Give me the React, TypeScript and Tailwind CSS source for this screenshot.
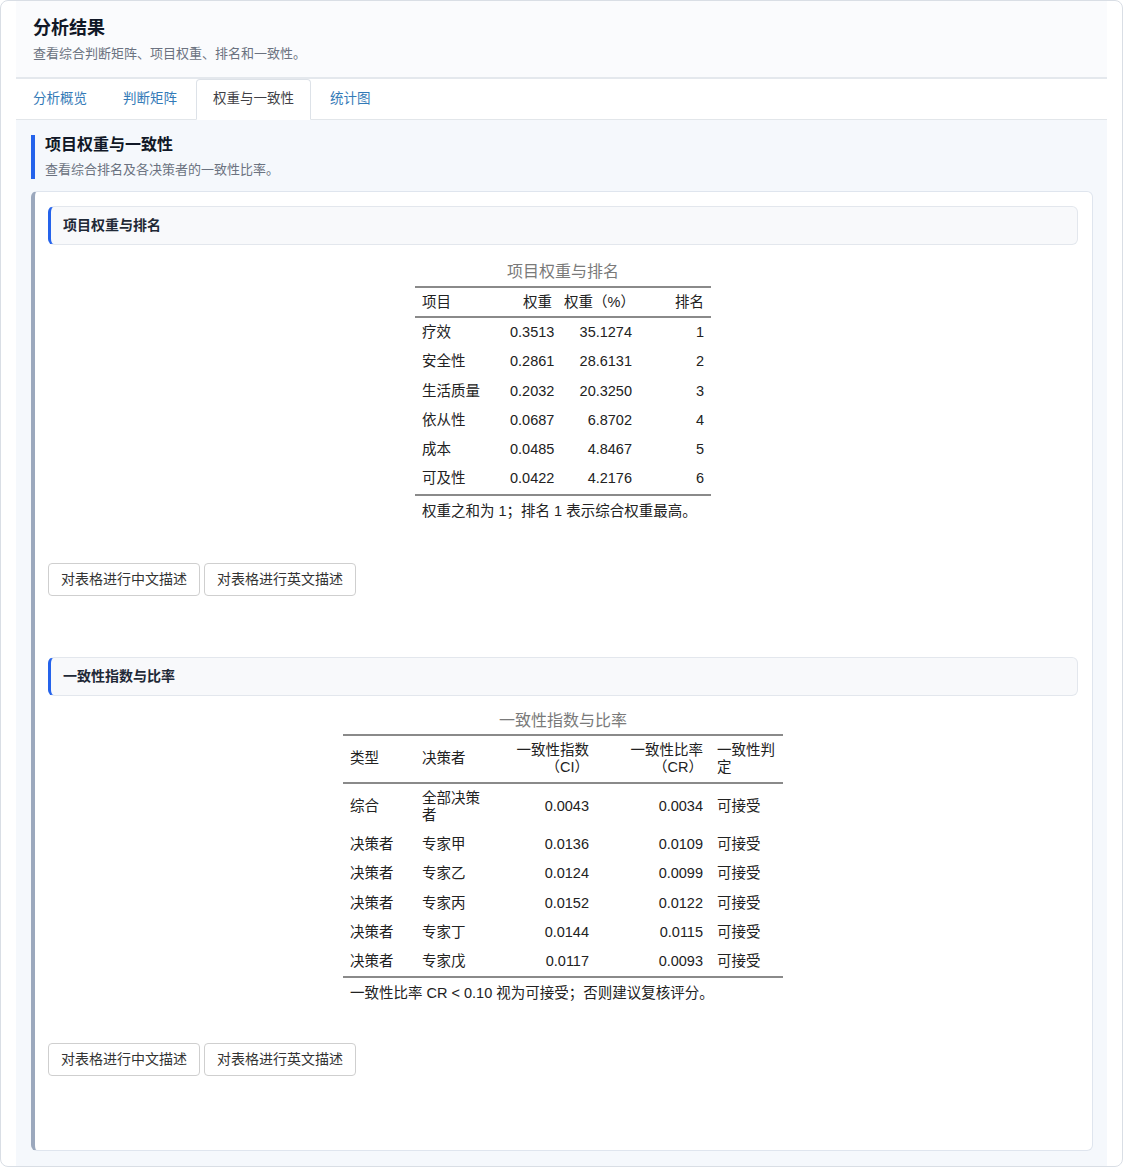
import React from 'react';

const FONT = '"Liberation Sans", "Noto Sans CJK SC", sans-serif';

const weights = [
  ['疗效', '0.3513', '35.1274', '1'],
  ['安全性', '0.2861', '28.6131', '2'],
  ['生活质量', '0.2032', '20.3250', '3'],
  ['依从性', '0.0687', '6.8702', '4'],
  ['成本', '0.0485', '4.8467', '5'],
  ['可及性', '0.0422', '4.2176', '6'],
];

const consistency = [
  ['综合', '全部决策者', '0.0043', '0.0034', '可接受'],
  ['决策者', '专家甲', '0.0136', '0.0109', '可接受'],
  ['决策者', '专家乙', '0.0124', '0.0099', '可接受'],
  ['决策者', '专家丙', '0.0152', '0.0122', '可接受'],
  ['决策者', '专家丁', '0.0144', '0.0115', '可接受'],
  ['决策者', '专家戊', '0.0117', '0.0093', '可接受'],
];

function SubHeader({ title }: { title: string }) {
  return (
    <div className="h-[39px] flex items-center pl-[12px] bg-[#f8f9fb] border border-[#e3e7ed] border-l-[3px] border-l-[#2563eb] rounded-md">
      <span className="text-[14px] font-bold text-[#1f2937]">{title}</span>
    </div>
  );
}

function Buttons() {
  return (
    <div className="flex gap-[4px]">
      <button className="h-[33px] px-3 border border-[#cfcfcf] rounded bg-white text-[14px] text-[#333]">对表格进行中文描述</button>
      <button className="h-[33px] px-3 border border-[#cfcfcf] rounded bg-white text-[14px] text-[#333]">对表格进行英文描述</button>
    </div>
  );
}

export default function App() {
  return (
    <div className="w-[1123px] h-[1167px] bg-white" style={{ fontFamily: FONT }}>
      <div className="h-full border border-[#d9dee5] rounded-lg px-[15px] flex flex-col">
        {/* Header */}
        <div className="bg-[#fafbfd] pl-[17px] pt-[15px] pb-[14px] border-b-2 border-[#e4e8ed]">
          <div className="text-[18px] leading-[24px] font-bold text-[#111827]">分析结果</div>
          <div className="mt-[5px] text-[13px] leading-[18px] text-[#6b7280]">查看综合判断矩阵、项目权重、排名和一致性。</div>
        </div>

        {/* Tabs */}
        <div className="flex h-[41px] border-b border-[#e2e6ea] bg-white">
          <div className="px-4 mr-[2px] border border-transparent flex items-center text-[13.5px] text-[#337ab7]">分析概览</div>
          <div className="px-4 mr-[2px] border border-transparent flex items-center text-[13.5px] text-[#337ab7]">判断矩阵</div>
          <div className="px-4 mr-[2px] border border-[#dde2e8] border-b-white rounded-t mb-[-1px] bg-white flex items-center text-[13.5px] text-[#3f3f46]">权重与一致性</div>
          <div className="px-4 mr-[2px] border border-transparent flex items-center text-[13.5px] text-[#337ab7]">统计图</div>
        </div>

        {/* Content */}
        <div className="flex-1 bg-[#f5f8fc] pt-[15px] pl-[15px] pr-[14px] pb-[15px] flex flex-col">
          <div className="border-l-4 border-[#2563eb] pl-[10px]">
            <div className="text-[16px] leading-[20px] font-bold text-[#111827]">项目权重与一致性</div>
            <div className="mt-[5px] text-[13px] leading-[19px] text-[#6b7280]">查看综合排名及各决策者的一致性比率。</div>
          </div>

          <div className="mt-[12px] flex-1 bg-white border border-[#dfe5ee] border-l-4 border-l-[#9ba8bd] rounded-md pt-[14px] pl-[13px] pr-[14px]">
            <SubHeader title="项目权重与排名" />

            <div className="mt-[16px] flex flex-col items-center text-[#222]">
              <div className="w-[296px]">
                <div className="text-center text-[16px] leading-[22px] text-[#7a7a7a] pb-[3px]">项目权重与排名</div>
                <table className="w-[296px] table-fixed border-collapse text-[14.5px]">
                  <colgroup>
                    <col className="w-[88px]" />
                    <col className="w-[56px]" />
                    <col className="w-[80px]" />
                    <col className="w-[72px]" />
                  </colgroup>
                  <thead>
                    <tr className="border-t-2 border-b-2 border-[#8a8a8a]">
                      <th className="px-[7px] py-[5px] leading-[18px] font-normal text-left">项目</th>
                      <th className="px-[7px] py-[5px] leading-[18px] font-normal text-right">权重</th>
                      <th className="pl-[4px] pr-[4px] py-[5px] leading-[18px] font-normal text-right whitespace-nowrap">权重（%）</th>
                      <th className="px-[7px] py-[5px] leading-[18px] font-normal text-right">排名</th>
                    </tr>
                  </thead>
                  <tbody className="border-b-2 border-[#8a8a8a]">
                    {weights.map((r) => (
                      <tr key={r[0]}>
                        <td className="px-[7px] py-[5px] leading-[19.3px] text-left">{r[0]}</td>
                        <td className="px-[7px] py-[5px] leading-[19.3px] text-right">{r[1]}</td>
                        <td className="px-[7px] py-[5px] leading-[19.3px] text-right">{r[2]}</td>
                        <td className="px-[7px] py-[5px] leading-[19.3px] text-right">{r[3]}</td>
                      </tr>
                    ))}
                  </tbody>
                </table>
                <div className="pt-[5px] px-[7px] text-[14.5px] leading-[20px] whitespace-nowrap">权重之和为 1；排名 1 表示综合权重最高。</div>
              </div>
            </div>

            <div className="mt-[42px]">
              <Buttons />
            </div>

            <div className="mt-[61px]">
              <SubHeader title="一致性指数与比率" />
            </div>

            <div className="mt-[14px] flex flex-col items-center text-[#222]">
              <div className="w-[440px]">
                <div className="text-center text-[16px] leading-[22px] text-[#7a7a7a] pb-[2px]">一致性指数与比率</div>
                <table className="w-[440px] table-fixed border-collapse text-[14.5px]">
                  <colgroup>
                    <col className="w-[72px]" />
                    <col className="w-[72px]" />
                    <col className="w-[109px]" />
                    <col className="w-[114px]" />
                    <col className="w-[73px]" />
                  </colgroup>
                  <thead>
                    <tr className="border-t-2 border-b-2 border-[#8a8a8a]">
                      <th className="px-[7px] py-[6px] leading-[17px] font-normal text-left align-middle">类型</th>
                      <th className="px-[7px] py-[6px] leading-[17px] font-normal text-left align-middle">决策者</th>
                      <th className="px-[7px] py-[6px] leading-[17px] font-normal text-right align-middle">一致性指数<br />（CI）</th>
                      <th className="px-[7px] py-[6px] leading-[17px] font-normal text-right align-middle">一致性比率<br />（CR）</th>
                      <th className="px-[7px] py-[6px] leading-[17px] font-normal text-left align-middle">一致性判定</th>
                    </tr>
                  </thead>
                  <tbody className="border-b-2 border-[#8a8a8a]">
                    {consistency.map((r) => (
                      <tr key={r[1]}>
                        <td className="px-[7px] py-[6px] leading-[17.2px] text-left align-middle">{r[0]}</td>
                        <td className="px-[7px] py-[6px] leading-[17.2px] text-left align-middle">{r[1]}</td>
                        <td className="px-[7px] py-[6px] leading-[17.2px] text-right align-middle">{r[2]}</td>
                        <td className="px-[7px] py-[6px] leading-[17.2px] text-right align-middle">{r[3]}</td>
                        <td className="px-[7px] py-[6px] leading-[17.2px] text-left align-middle">{r[4]}</td>
                      </tr>
                    ))}
                  </tbody>
                </table>
                <div className="pt-[5px] px-[7px] text-[14.5px] leading-[20px] whitespace-nowrap">一致性比率 CR &lt; 0.10 视为可接受；否则建议复核评分。</div>
              </div>
            </div>

            <div className="mt-[40px]">
              <Buttons />
            </div>
          </div>
        </div>
      </div>
    </div>
  );
}
